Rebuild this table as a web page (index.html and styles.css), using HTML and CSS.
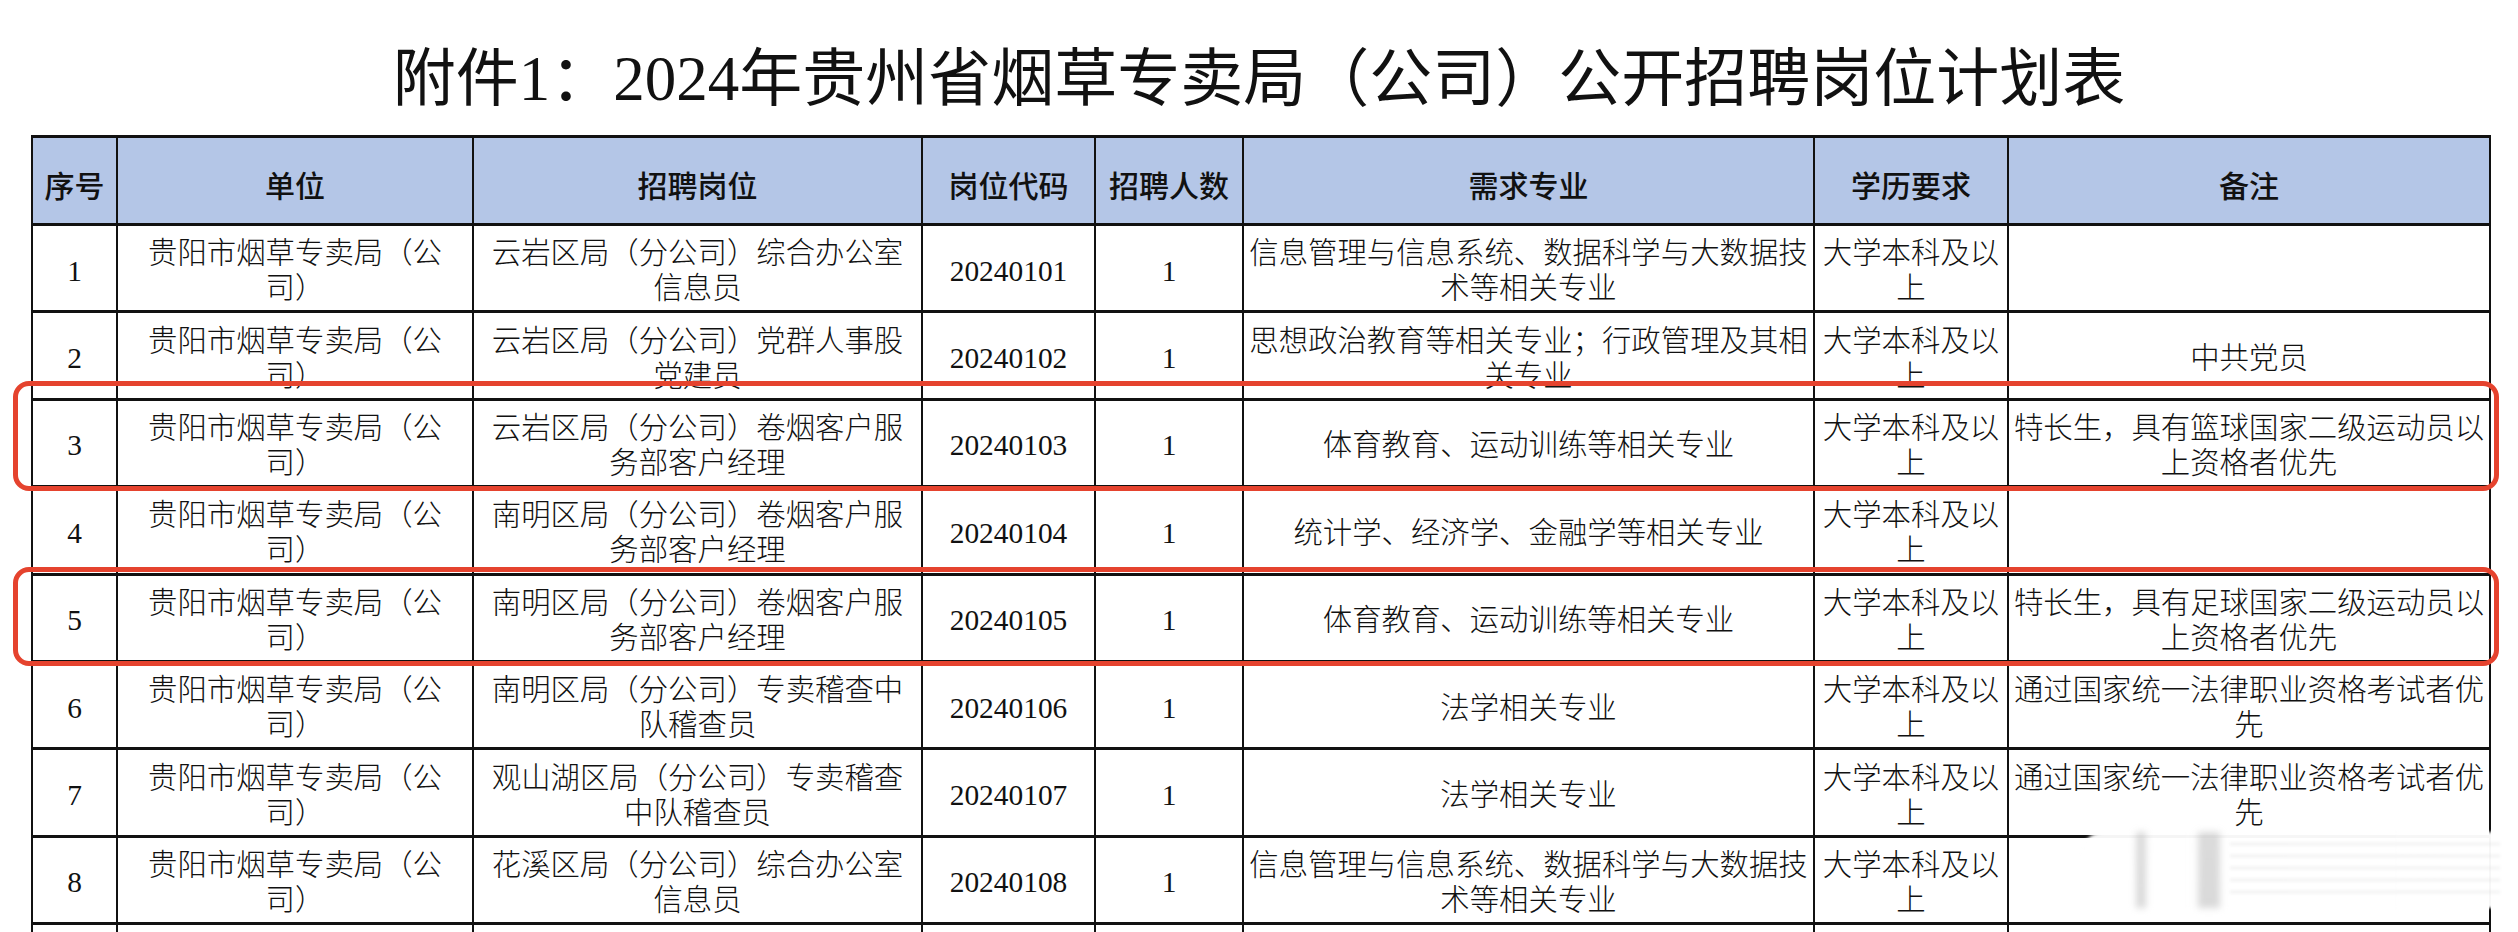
FILE: index.html
```html
<!DOCTYPE html>
<html lang="zh-CN">
<head>
<meta charset="utf-8">
<title>附件1：2024年贵州省烟草专卖局（公司）公开招聘岗位计划表</title>
<link rel="stylesheet" href="styles.css">
</head>
<body>
<div class="page">
  <h1 class="title">附件1：2024年贵州省烟草专卖局（公司）公开招聘岗位计划表</h1>
  <div class="sheet">
    <table class="plan">
      <colgroup>
        <col class="c-no"><col class="c-unit"><col class="c-post"><col class="c-code"><col class="c-num"><col class="c-major"><col class="c-edu"><col class="c-note">
      </colgroup>
      <thead>
        <tr class="head">
          <th>序号</th><th>单位</th><th>招聘岗位</th><th>岗位代码</th><th>招聘人数</th><th>需求专业</th><th>学历要求</th><th>备注</th>
        </tr>
      </thead>
      <tbody>
        <tr>
          <td>1</td><td>贵阳市烟草专卖局（公<br>司）</td><td>云岩区局（分公司）综合办公室<br>信息员</td><td>20240101</td><td>1</td><td>信息管理与信息系统、数据科学与大数据技<br>术等相关专业</td><td>大学本科及以<br>上</td><td></td>
        </tr>
        <tr>
          <td>2</td><td>贵阳市烟草专卖局（公<br>司）</td><td>云岩区局（分公司）党群人事股<br>党建员</td><td>20240102</td><td>1</td><td>思想政治教育等相关专业；行政管理及其相<br>关专业</td><td>大学本科及以<br>上</td><td>中共党员</td>
        </tr>
        <tr>
          <td>3</td><td>贵阳市烟草专卖局（公<br>司）</td><td>云岩区局（分公司）卷烟客户服<br>务部客户经理</td><td>20240103</td><td>1</td><td>体育教育、运动训练等相关专业</td><td>大学本科及以<br>上</td><td>特长生，具有篮球国家二级运动员以<br>上资格者优先</td>
        </tr>
        <tr>
          <td>4</td><td>贵阳市烟草专卖局（公<br>司）</td><td>南明区局（分公司）卷烟客户服<br>务部客户经理</td><td>20240104</td><td>1</td><td>统计学、经济学、金融学等相关专业</td><td>大学本科及以<br>上</td><td></td>
        </tr>
        <tr>
          <td>5</td><td>贵阳市烟草专卖局（公<br>司）</td><td>南明区局（分公司）卷烟客户服<br>务部客户经理</td><td>20240105</td><td>1</td><td>体育教育、运动训练等相关专业</td><td>大学本科及以<br>上</td><td>特长生，具有足球国家二级运动员以<br>上资格者优先</td>
        </tr>
        <tr>
          <td>6</td><td>贵阳市烟草专卖局（公<br>司）</td><td>南明区局（分公司）专卖稽查中<br>队稽查员</td><td>20240106</td><td>1</td><td>法学相关专业</td><td>大学本科及以<br>上</td><td>通过国家统一法律职业资格考试者优<br>先</td>
        </tr>
        <tr>
          <td>7</td><td>贵阳市烟草专卖局（公<br>司）</td><td>观山湖区局（分公司）专卖稽查<br>中队稽查员</td><td>20240107</td><td>1</td><td>法学相关专业</td><td>大学本科及以<br>上</td><td>通过国家统一法律职业资格考试者优<br>先</td>
        </tr>
        <tr>
          <td>8</td><td>贵阳市烟草专卖局（公<br>司）</td><td>花溪区局（分公司）综合办公室<br>信息员</td><td>20240108</td><td>1</td><td>信息管理与信息系统、数据科学与大数据技<br>术等相关专业</td><td>大学本科及以<br>上</td><td></td>
        </tr>
        <tr>
          <td></td><td></td><td></td><td></td><td></td><td></td><td></td><td></td>
        </tr>
      </tbody>
    </table>
    <div class="mark mark-a"></div>
    <div class="mark mark-b"></div>
    <div class="watermark">
      <span class="wm-bar wm-bar-1"></span>
      <span class="wm-bar wm-bar-2"></span>
      <span class="wm-lines"></span>
    </div>
  </div>
</div>
</body>
</html>
```
FILE: styles.css
```css
html, body {
  margin: 0;
  padding: 0;
  background: #ffffff;
}

.page {
  width: 2518px;
  height: 932px;
  overflow: hidden;
  position: relative;
  background: #ffffff;
}

.title {
  margin: 0;
  padding-top: 48px;
  height: 87px;
  line-height: 62px;
  text-align: center;
  font-family: "Liberation Serif", "Noto Sans CJK SC", serif;
  font-size: 63px;
  font-weight: 400;
  color: #111111;
  white-space: nowrap;
}

.sheet {
  padding-left: 31px;
}

.plan {
  border-collapse: collapse;
  table-layout: fixed;
  width: 2458px;
}

.c-no { width: 85px; }
.c-unit { width: 356px; }
.c-post { width: 449px; }
.c-code { width: 173px; }
.c-num { width: 148px; }
.c-major { width: 571px; }
.c-edu { width: 194px; }
.c-note { width: 482px; }

.plan th,
.plan td {
  border-left: 2px solid #111111;
  border-right: 2px solid #111111;
  border-top: 3px solid #111111;
  border-bottom: 3px solid #111111;
  padding: 6px 0 0 0;
  text-align: center;
  vertical-align: middle;
  white-space: nowrap;
  overflow: hidden;
  color: #111111;
}

.head {
  height: 88px;
}

.plan th {
  background: #b4c6e7;
  font-family: "Noto Sans CJK SC", sans-serif;
  font-size: 30px;
  font-weight: 500;
  line-height: 36px;
}

.plan tbody tr {
  height: 87.4px;
}

.plan td {
  font-family: "Liberation Serif", "Noto Sans CJK SC", serif;
  font-size: 29.4px;
  font-weight: 300;
  line-height: 35px;
}

.mark {
  position: absolute;
  left: 13px;
  width: 2486px;
  box-sizing: border-box;
  border: 5px solid #e5432e;
  border-radius: 16px;
  pointer-events: none;
}

.mark-a {
  top: 381px;
  height: 110px;
}

.mark-b {
  top: 567px;
  height: 99px;
}

.watermark {
  position: absolute;
  left: 2080px;
  top: 832px;
  width: 420px;
  height: 76px;
  background: linear-gradient(90deg, rgba(255,255,255,0.96) 0%, rgba(255,255,255,0.97) 100%);
  border-radius: 24px 0 0 24px;
  filter: blur(1.5px);
}

.wm-bar {
  position: absolute;
  top: 0;
  bottom: 0;
  background: linear-gradient(180deg, rgba(150,150,150,0.35), rgba(180,180,180,0.5));
  filter: blur(3px);
}

.wm-bar-1 {
  left: 56px;
  width: 10px;
}

.wm-bar-2 {
  left: 118px;
  width: 22px;
}

.wm-lines {
  position: absolute;
  left: 150px;
  right: 0;
  top: 10px;
  bottom: 10px;
  background: repeating-linear-gradient(180deg, rgba(200,200,200,0.18) 0px, rgba(200,200,200,0.18) 4px, rgba(255,255,255,0) 4px, rgba(255,255,255,0) 12px);
}
```
